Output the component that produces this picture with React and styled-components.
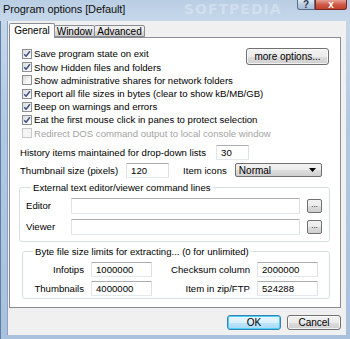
import React from 'react';
import styled, { createGlobalStyle } from 'styled-components';

const Global = createGlobalStyle`
  html, body { margin: 0; padding: 0; background: #fff; }
  body { font-family: "Liberation Sans", Arial, sans-serif; font-size: 9.6px; color: #000; }
  * { box-sizing: border-box; }
`;

const Window = styled.div`
  position: relative;
  width: 350px;
  height: 339px;
  display: flex;
  flex-direction: column;
  overflow: hidden;
  background: linear-gradient(180deg, #b9cde4 0px, #c6d7ea 20px, #b3c9e2 120px, #a9c1dd 339px);
`;

const TitleBar = styled.div`
  height: 21px;
  display: flex;
  align-items: flex-start;
  padding-left: 3px;
`;

const Title = styled.div`
  padding-top: 3px;
  font-family: "Liberation Sans", Arial, sans-serif;
  font-size: 11px;
  color: #111;
  letter-spacing: -0.1px;
  z-index: 1;
`;

const Watermark = styled.div`
  position: absolute;
  left: ${p => p.$x}px;
  top: ${p => p.$y}px;
  font-family: "DejaVu Sans", sans-serif;
  font-weight: bold;
  font-size: ${p => p.$size}px;
  line-height: 1;
  letter-spacing: 1px;
  color: ${p => p.$color};
  pointer-events: none;
  white-space: nowrap;
`;

const Caption = styled.div`
  margin-left: auto;
  margin-right: 3px;
  display: flex;
  z-index: 1;
`;

const CapButton = styled.div`
  width: ${p => p.$w}px;
  height: 10px;
  display: flex;
  align-items: flex-end;
  justify-content: center;
  border: 1px solid ${p => (p.$close ? '#7a2a22' : '#5a6d88')};
  border-top: none;
  border-radius: ${p => (p.$close ? '0 0 3px 0' : '0 0 0 3px')};
  background: ${p =>
    p.$close
      ? 'linear-gradient(180deg, #e5a093 0%, #cf5b48 50%, #c2412c 100%)'
      : 'linear-gradient(180deg, #dfe8f2 0%, #bccde2 50%, #aabfda 100%)'};
  color: ${p => (p.$close ? '#fff' : '#2a3a55')};
  font-size: 10px;
  font-weight: bold;
  line-height: 9px;
  overflow: hidden;
`;

const Frame = styled.div`
  flex: 1;
  display: flex;
  padding: 0 4px 4px 6px;
  border-left: 1px solid #5d7ea9;
  min-width: 0;
`;

const Client = styled.div`
  flex: 1;
  min-width: 0;
  display: flex;
  flex-direction: column;
  background: #f0f0f0;
  padding: 0 5px 0 1px;
  border-left: 1px solid #8aa3c4;
`;

const TabStrip = styled.div`
  height: 16px;
  display: flex;
  align-items: flex-end;
`;

const Tab = styled.div`
  position: relative;
  z-index: ${p => (p.$active ? 2 : 1)};
  width: ${p => p.$w}px;
  height: ${p => (p.$active ? 15 : 12)}px;
  margin-bottom: ${p => (p.$active ? -1 : 0)}px;
  margin-left: ${p => (p.$first ? 0 : -1)}px;
  display: flex;
  align-items: center;
  justify-content: center;
  padding-bottom: ${p => (p.$active ? 1 : 0)}px;
  border: 1px solid #898c95;
  border-bottom: ${p => (p.$active ? 'none' : '1px solid #898c95')};
  border-radius: 2px 2px 0 0;
  background: ${p => (p.$active ? '#fff' : 'linear-gradient(180deg, #f2f2f2 0%, #ebebeb 50%, #dddddd 51%, #cfcfcf 100%)')};
  color: #000;
  font-size: 10px;
`;

const Panel = styled.div`
  height: 271px;
  min-width: 0;
  display: flex;
  flex-direction: column;
  background: #fff;
  border: 1px solid #898c95;
  padding: 9.4px 10px 0 9px;
`;

const TopSection = styled.div`
  display: grid;
  grid-template-columns: 1fr;
  align-items: start;
`;

const CheckList = styled.div`
  grid-area: 1 / 1;
  display: flex;
  flex-direction: column;
  margin-left: 3px;
`;

const CheckRow = styled.div`
  height: 13.2px;
  display: flex;
  align-items: center;
  gap: 2px;
  color: ${p => (p.$disabled ? '#a3a3a3' : '#000')};
  white-space: nowrap;
`;

const Box = styled.span`
  width: 10px;
  height: 10px;
  flex: none;
  display: flex;
  align-items: center;
  justify-content: center;
  border: 1px solid ${p => (p.$disabled ? '#c8c8c8' : '#8e8f8f')};
  background: ${p => (p.$disabled ? '#f4f4f4' : 'linear-gradient(135deg, #d8dadc 0%, #f0f1f2 55%, #ffffff 100%)')};
`;

const Button = styled.div`
  grid-area: ${p => (p.$overlay ? '1 / 1' : 'auto')};
  justify-self: ${p => (p.$overlay ? 'end' : 'auto')};
  margin-right: ${p => (p.$overlay ? 1 : 0)}px;
  width: ${p => p.$w}px;
  height: ${p => p.$h}px;
  display: flex;
  align-items: center;
  justify-content: center;
  margin-top: ${p => p.$mt || 0}px;
  border: 1px solid ${p => (p.$default ? '#3c7fb1' : '#707070')};
  border-radius: 3px;
  box-shadow: inset 0 0 0 1px ${p => (p.$default ? '#48d2f8' : 'rgba(255,255,255,0.7)')};
  background: ${p =>
    p.$default
      ? 'linear-gradient(180deg, #eaf6fd 0%, #d9f0fc 50%, #bee6fd 51%, #a7d9f5 100%)'
      : 'linear-gradient(180deg, #f2f2f2 0%, #ebebeb 50%, #dddddd 51%, #cfcfcf 100%)'};
  font-size: 10px;
  color: #000;
  white-space: nowrap;
`;

const SettingRow = styled.div`
  display: flex;
  align-items: center;
  margin-top: ${p => p.$mt}px;
  margin-left: 1px;
  white-space: nowrap;
`;

const Label = styled.span`
  margin-left: ${p => p.$ml || 0}px;
  color: #000;
  text-align: ${p => p.$align || 'left'};
  white-space: nowrap;
`;

const TextBox = styled.div`
  width: ${p => (p.$w ? `${p.$w}px` : 'auto')};
  height: ${p => p.$h || 15}px;
  margin-left: ${p => p.$ml || 0}px;
  min-width: 0;
  display: flex;
  align-items: center;
  padding-left: 4px;
  background: #fff;
  border: 1px solid;
  border-color: #abadb3 #dbdfe6 #e3e9ef #e2e3ea;
  border-radius: 1px;
  color: #000;
`;

const Select = styled.div`
  width: 87px;
  height: 14px;
  margin-left: ${p => p.$ml}px;
  display: flex;
  align-items: center;
  justify-content: space-between;
  padding: 0 5px 0 3px;
  border: 1px solid #707070;
  border-radius: 2px;
  background: linear-gradient(180deg, #f2f2f2 0%, #ebebeb 50%, #dddddd 51%, #cfcfcf 100%);
  color: #000;
  font-size: 10px;
`;

const Group = styled.fieldset`
  margin: ${p => p.$mt}px 0 0 ${p => p.$ml}px;
  padding: ${p => p.$pad};
  border: 1px solid #d5dfe5;
  border-radius: 3px;
  min-width: 0;
`;

const Legend = styled.legend`
  margin-left: ${p => p.$ml}px;
  padding: 0 2px;
  line-height: 12px;
  color: #000;
  white-space: nowrap;
`;

const EditorGrid = styled.div`
  display: grid;
  grid-template-columns: 38px minmax(0, 1fr) 15px;
  column-gap: 7px;
  row-gap: 5px;
  align-items: center;
`;

const LimitsGrid = styled.div`
  display: grid;
  grid-template-columns: 55px 61px 91px 61px;
  column-gap: 7px;
  row-gap: 4px;
  align-items: center;
`;

const SmallButton = styled.div`
  width: 15px;
  height: 14px;
  display: flex;
  align-items: center;
  justify-content: center;
  border: 1px solid #707070;
  border-radius: 2px;
  background: linear-gradient(180deg, #f2f2f2 0%, #ebebeb 50%, #dddddd 51%, #cfcfcf 100%);
  font-size: 8px;
  line-height: 8px;
  padding-bottom: 2px;
  color: #000;
`;

const ButtonRow = styled.div`
  display: flex;
  justify-content: flex-end;
  gap: 6px;
  padding-top: 7px;
`;

const Check = ({ checked, disabled }) => (
  <Box $disabled={disabled}>
    {checked && (
      <svg width="8" height="8" viewBox="0 0 8 8">
        <path d="M1.2 4.2 L3.1 6.3 L6.9 1.2" fill="none" stroke="#3f5380" strokeWidth="1.5" strokeLinejoin="round" />
      </svg>
    )}
  </Box>
);

const options = [
  { t: 'Save program state on exit', c: true },
  { t: 'Show Hidden files and folders', c: true },
  { t: 'Show administrative shares for network folders', c: false },
  { t: 'Report all file sizes in bytes (clear to show kB/MB/GB)', c: true },
  { t: 'Beep on warnings and errors', c: true },
  { t: 'Eat the first mouse click in panes to protect selection', c: true },
  { t: 'Redirect DOS command output to local console window', c: false, d: true },
];

export default function App() {
  return (
    <>
      <Global />
      <Window>
        <Watermark $x={184} $y={2} $size={14} $color="rgba(255,255,255,0.3)">SOFTPEDIA</Watermark>
        <TitleBar>
          <Title>Program options [Default]</Title>
          <Caption>
            <CapButton $w={18}>?</CapButton>
            <CapButton $w={32} $close>x</CapButton>
          </Caption>
        </TitleBar>
        <Frame>
          <Client>
            <TabStrip>
              <Tab $active $first $w={46}>General</Tab>
              <Tab $w={41}>Window</Tab>
              <Tab $w={51}>Advanced</Tab>
            </TabStrip>
            <Panel>
              <TopSection>
                <CheckList>
                  {options.map(o => (
                    <CheckRow key={o.t} $disabled={o.d}>
                      <Check checked={o.c} disabled={o.d} />
                      {o.t}
                    </CheckRow>
                  ))}
                </CheckList>
                <Button $overlay $w={83} $h={17} $mt={1}>more options...</Button>
              </TopSection>
              <SettingRow $mt={5}>
                <Label>History items maintained for drop-down lists</Label>
                <TextBox $w={33} $ml={10}>30</TextBox>
              </SettingRow>
              <SettingRow $mt={3}>
                <Label>Thumbnail size (pixels)</Label>
                <TextBox $w={43} $ml={8}>120</TextBox>
                <Label $ml={14}>Item icons</Label>
                <Select $ml={8}>
                  <span>Normal</span>
                  <svg width="7" height="4" viewBox="0 0 7 4"><path d="M0 0 H7 L3.5 4 Z" fill="#000" /></svg>
                </Select>
              </SettingRow>
              <Group $mt={4} $ml={0} $pad="4px 7px 6px 6px">
                <Legend $ml={5}>External text editor/viewer command lines</Legend>
                <EditorGrid>
                  <Label>Editor</Label>
                  <TextBox $h={16} />
                  <SmallButton>...</SmallButton>
                  <Label>Viewer</Label>
                  <TextBox $h={16} />
                  <SmallButton>...</SmallButton>
                </EditorGrid>
              </Group>
              <Group $mt={4} $ml={3} $pad="4px 6px 2px 6px">
                <Legend $ml={4}>Byte file size limits for extracting... (0 for unlimited)</Legend>
                <LimitsGrid>
                  <Label $align="right">Infotips</Label>
                  <TextBox>1000000</TextBox>
                  <Label $align="right">Checksum column</Label>
                  <TextBox>2000000</TextBox>
                  <Label $align="right">Thumbnails</Label>
                  <TextBox>4000000</TextBox>
                  <Label $align="right">Item in zip/FTP</Label>
                  <TextBox>524288</TextBox>
                </LimitsGrid>
              </Group>
            </Panel>
            <ButtonRow>
              <Button $w={54} $h={15} $default>OK</Button>
              <Button $w={54} $h={15}>Cancel</Button>
            </ButtonRow>
          </Client>
        </Frame>
      </Window>
    </>
  );
}
